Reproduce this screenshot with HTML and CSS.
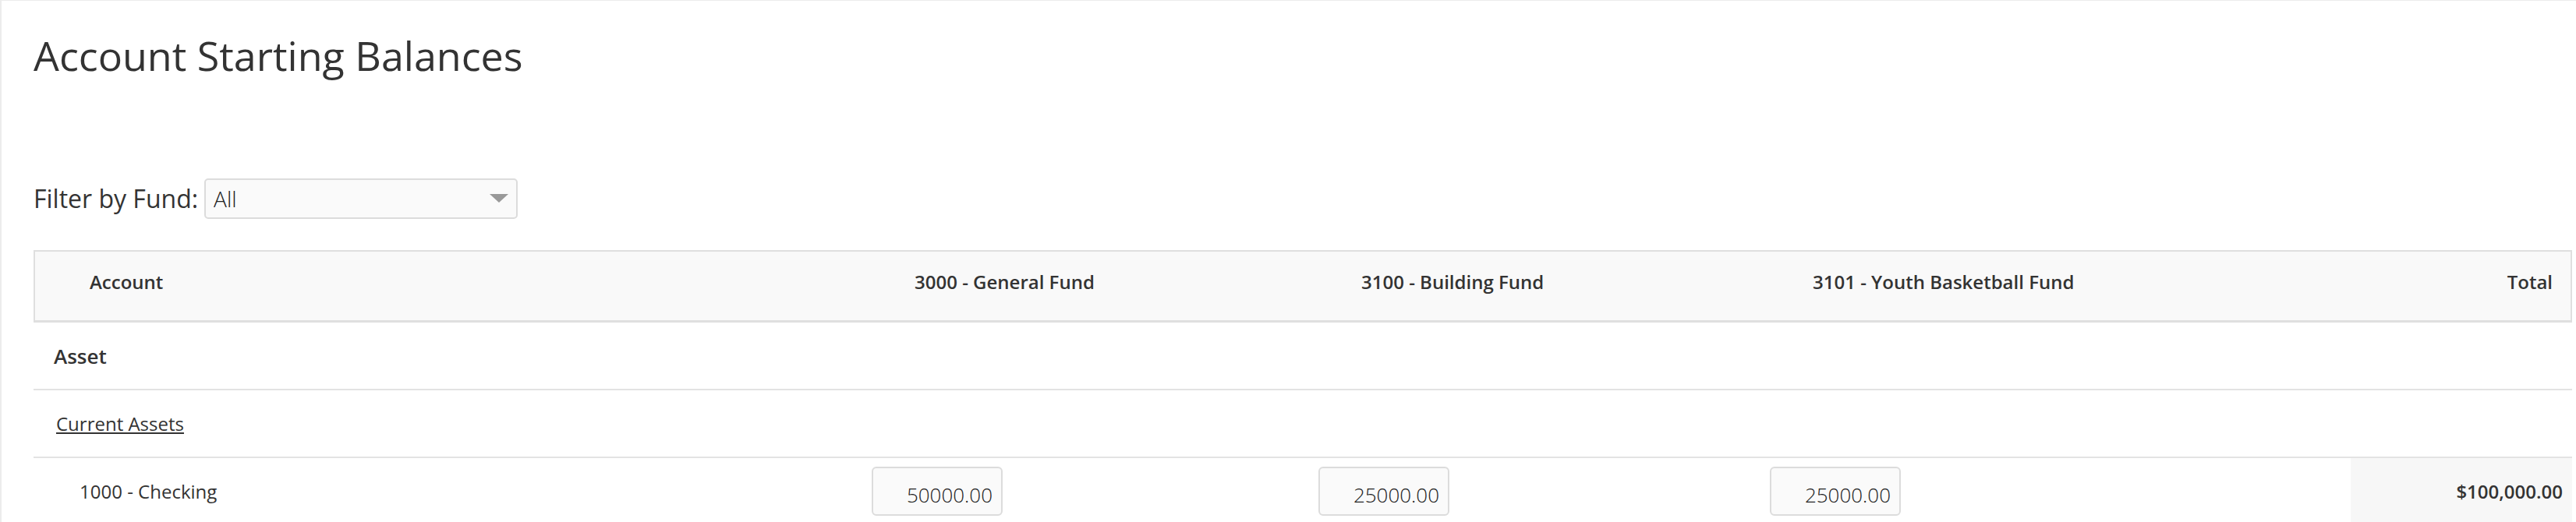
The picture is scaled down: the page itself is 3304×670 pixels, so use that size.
FILE: index.html
```html
<!DOCTYPE html>
<html lang="en">
<head>
<meta charset="utf-8">
<title>Account Starting Balances</title>
<link rel="stylesheet" href="styles.css">
</head>
<body>
<div class="page">
  <h1 class="page-title">Account Starting Balances</h1>
  <div class="filter">
    <label class="filter-label" for="fund">Filter by Fund:</label>
    <div class="select-wrap">
      <select id="fund" class="select"><option>All</option></select>
    </div>
  </div>
  <div class="balances">
    <div class="grid head">
      <div class="th th-account">Account</div>
      <div class="th th-fund">3000 - General Fund</div>
      <div class="th th-fund">3100 - Building Fund</div>
      <div class="th th-fund">3101 - Youth Basketball Fund</div>
      <div class="th"></div>
      <div class="th th-total">Total</div>
    </div>
    <div class="grid row">
      <div class="cell cat">Asset</div>
    </div>
    <div class="grid row">
      <div class="cell sub"><a href="#">Current Assets</a></div>
    </div>
    <div class="grid row">
      <div class="cell acct">1000 - Checking</div>
      <div class="cell amt"><input class="amount" type="text" value="50000.00"></div>
      <div class="cell amt"><input class="amount" type="text" value="25000.00"></div>
      <div class="cell amt"><input class="amount" type="text" value="25000.00"></div>
      <div class="cell"></div>
      <div class="cell total">$100,000.00</div>
    </div>
  </div>
</div>
</body>
</html>
```
FILE: styles.css
```css
* { box-sizing: border-box; }
html, body { margin: 0; background: #fff; overflow: hidden; }
body {
  font-family: "Open Sans", "Liberation Sans", Arial, sans-serif;
  color: #333;
}
.page {
  border-top: 1px solid #ececec;
  border-left: 2px solid #ececec;
  padding: 40px 5px 0 41px;
  min-height: 100vh;
}
.page-title {
  margin: 0;
  font-size: 52px;
  font-weight: 400;
  line-height: 60px;
  color: #333;
}
.filter {
  display: flex;
  align-items: center;
  gap: 8px;
  margin-top: 128px;
}
.filter-label {
  font-size: 32px;
  line-height: 44px;
}
.select-wrap {
  position: relative;
  width: 402px;
  height: 52px;
}
.select {
  appearance: none;
  -webkit-appearance: none;
  width: 100%;
  height: 100%;
  border: 2px solid #dcdcdc;
  border-radius: 5px;
  background: #fafafa;
  padding: 0 40px 0 10px;
  font-family: inherit;
  font-size: 28px;
  font-weight: 300;
  color: #222;
}
.select-wrap::after {
  content: "";
  position: absolute;
  right: 12px;
  top: 20px;
  border-left: 12px solid transparent;
  border-right: 12px solid transparent;
  border-top: 11px solid #999;
  pointer-events: none;
}
.balances { margin-top: 40px; }
.grid {
  display: grid;
  grid-template-columns: 1051px 573px 579px 576px 193px 1fr;
}
.head { height: 93px; }
.th {
  background: #f9f9f9;
  border-top: 2px solid #dfdfdf;
  border-bottom: 3px solid #dfdfdf;
  padding-top: 22px;
  font-size: 24px;
  font-weight: 600;
  line-height: 33px;
  white-space: nowrap;
}
.th-account { border-left: 2px solid #dfdfdf; padding-left: 70px; }
.th-fund { padding-left: 79px; }
.th-total { border-right: 2px solid #dfdfdf; text-align: right; padding-right: 23px; }
.row {
  height: 87px;
  border-bottom: 2px solid #e3e3e3;
  align-items: center;
}
.cell { white-space: nowrap; }
.cat { padding-left: 26px; font-size: 26px; font-weight: 600; }
.sub { padding-left: 29px; font-size: 24px; }
.sub a { color: #333; text-decoration: underline; }
.acct { padding-left: 59px; font-size: 24px; }
.amt { padding-left: 24px; }
.amount {
  width: 168px;
  height: 63px;
  border: 2px solid #dcdcdc;
  border-radius: 6px;
  background: #fafafa;
  padding: 8px 11px 0;
  text-align: right;
  font-family: inherit;
  font-size: 26px;
  font-weight: 300;
  color: #222;
}
.total {
  align-self: stretch;
  background: #f7f7f7;
  display: flex;
  align-items: center;
  justify-content: flex-end;
  padding-right: 12px;
  font-size: 24px;
  font-weight: 600;
}
```
